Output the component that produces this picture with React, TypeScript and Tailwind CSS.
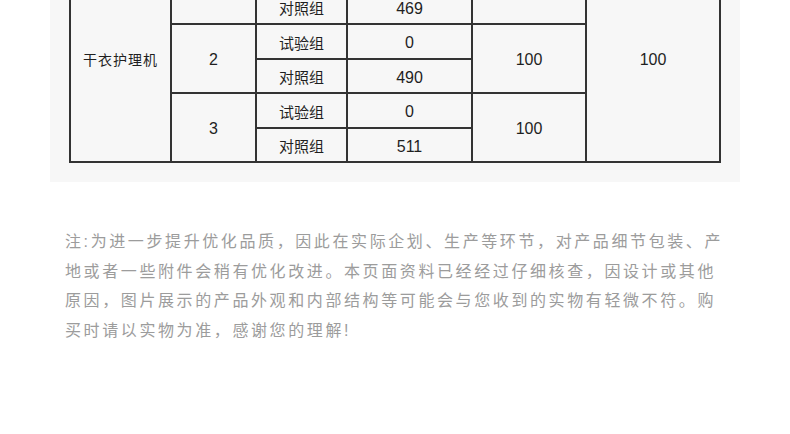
import React from "react";

const font = { fontFamily: "'Liberation Sans', 'Noto Sans CJK SC', sans-serif" };

type Cell = { text: string; cls: string };

const cells: Cell[] = [
  { text: "干衣护理机", cls: "col-start-1 row-start-1 row-span-6 text-[14px] tracking-[1px]" },
  { text: "", cls: "col-start-2 row-start-1 row-span-2 text-[16px]" },
  { text: "", cls: "col-start-3 row-start-1 text-[15px]" },
  { text: "", cls: "col-start-4 row-start-1 text-[16px]" },
  { text: "", cls: "col-start-5 row-start-1 row-span-2 text-[16px]" },
  { text: "100", cls: "col-start-6 row-start-1 row-span-6 text-[16px]" },
  { text: "对照组", cls: "col-start-3 row-start-2 text-[15px]" },
  { text: "469", cls: "col-start-4 row-start-2 text-[16px]" },
  { text: "2", cls: "col-start-2 row-start-3 row-span-2 text-[16px]" },
  { text: "试验组", cls: "col-start-3 row-start-3 text-[15px]" },
  { text: "0", cls: "col-start-4 row-start-3 text-[16px]" },
  { text: "100", cls: "col-start-5 row-start-3 row-span-2 text-[16px]" },
  { text: "对照组", cls: "col-start-3 row-start-4 text-[15px]" },
  { text: "490", cls: "col-start-4 row-start-4 text-[16px]" },
  { text: "3", cls: "col-start-2 row-start-5 row-span-2 text-[16px]" },
  { text: "试验组", cls: "col-start-3 row-start-5 text-[15px]" },
  { text: "0", cls: "col-start-4 row-start-5 text-[16px]" },
  { text: "100", cls: "col-start-5 row-start-5 row-span-2 text-[16px]" },
  { text: "对照组", cls: "col-start-3 row-start-6 text-[15px]" },
  { text: "511", cls: "col-start-4 row-start-6 text-[16px]" },
];

export default function App() {
  return (
    <div className="w-[790px] h-[434px] bg-white overflow-hidden" style={font}>
      <div className="ml-[50px] w-[690px] bg-[#f7f7f7] px-[19px] pb-[19px] flex flex-col">
        <div className="-mt-[46px] w-[652px] grid grid-cols-[99px_83px_89px_123px_112px_132px] grid-rows-[33px_32px_33px_32px_33px_32px] gap-[2px] p-[2px] bg-[#333333]">
          {cells.map((c, i) => (
            <div
              key={i}
              className={`bg-[#f7f7f7] flex items-center justify-center pt-[3px] text-[#1f1f1f] leading-none ${c.cls}`}
            >
              {c.text}
            </div>
          ))}
        </div>
      </div>
      <p className="mt-[45px] ml-[65px] text-[16px] leading-[29.5px] tracking-[2.6px] text-[#9c9c9c] whitespace-nowrap">
        注:为进一步提升优化品质，因此在实际企划、生产等环节，对产品细节包装、产
        <br />
        地或者一些附件会稍有优化改进。本页面资料已经经过仔细核查，因设计或其他
        <br />
        原因，图片展示的产品外观和内部结构等可能会与您收到的实物有轻微不符。购
        <br />
        买时请以实物为准，感谢您的理解!
      </p>
    </div>
  );
}
